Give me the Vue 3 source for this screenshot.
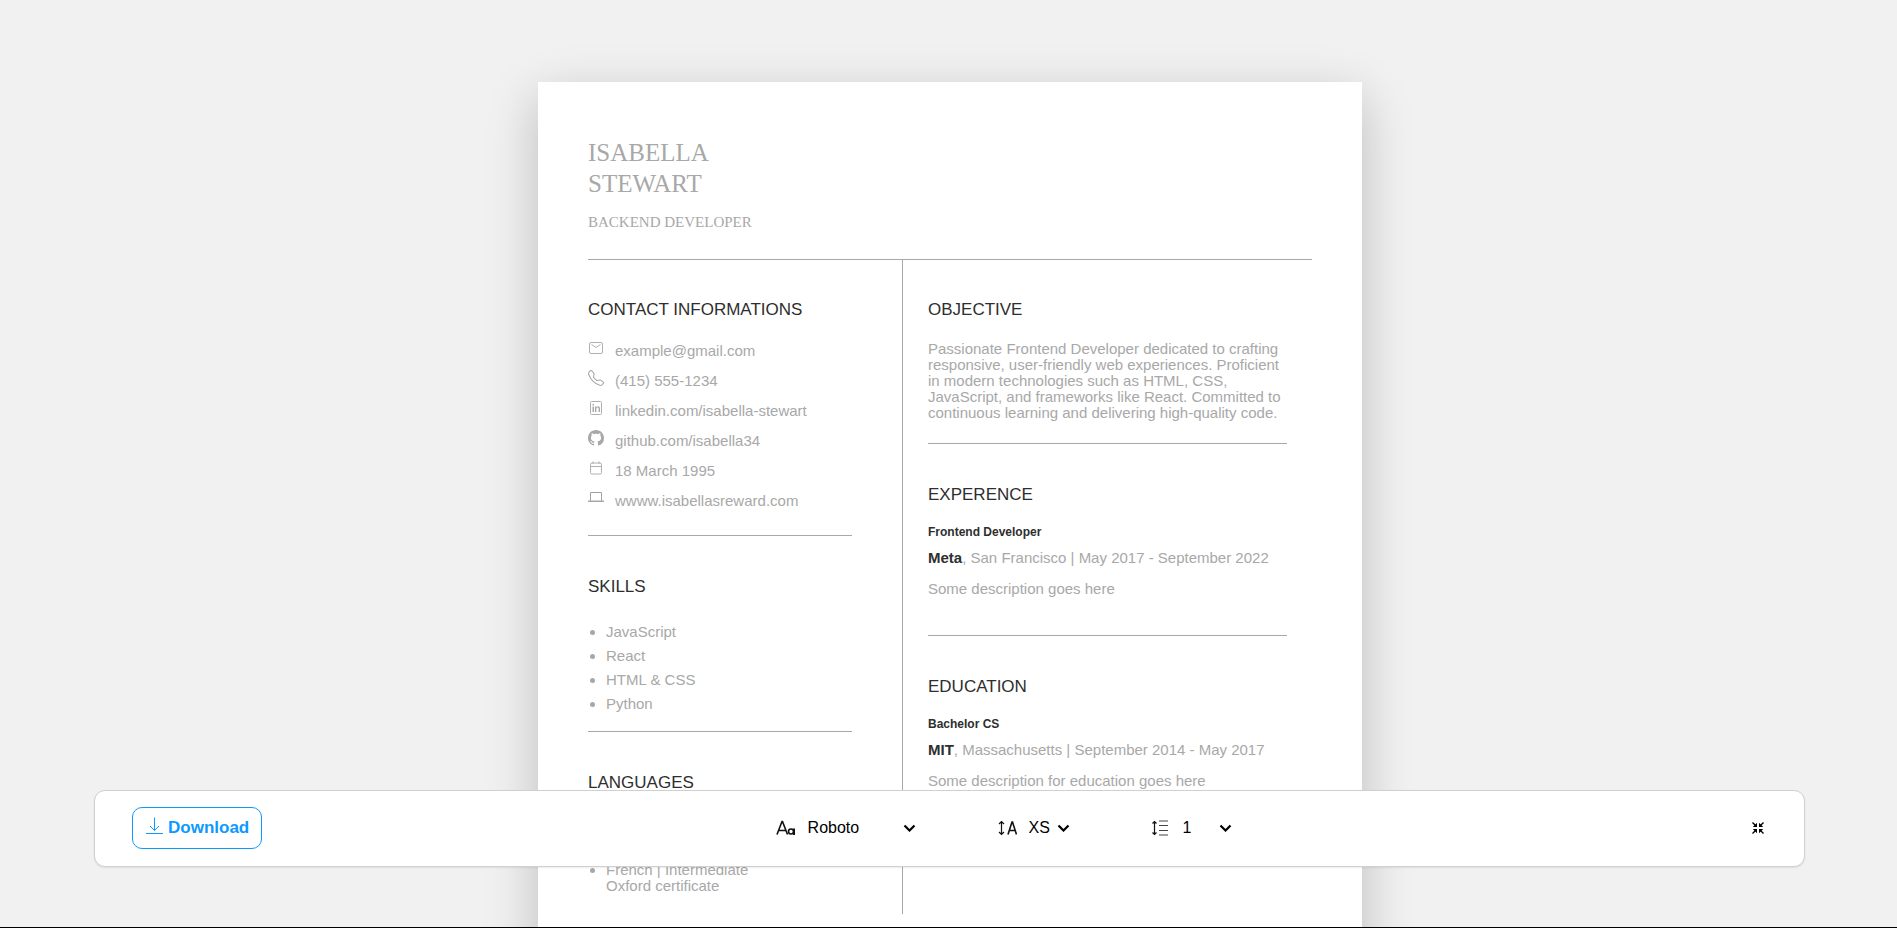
<script setup>
import { ref } from 'vue'

const font = ref('Roboto')
const size = ref('XS')
const spacing = ref('1')

const contacts = [
  { icon: 'mail', text: 'example@gmail.com' },
  { icon: 'phone', text: '(415) 555-1234' },
  { icon: 'linkedin', text: 'linkedin.com/isabella-stewart' },
  { icon: 'github', text: 'github.com/isabella34' },
  { icon: 'calendar', text: '18 March 1995' },
  { icon: 'laptop', text: 'wwww.isabellasreward.com' },
]

const skills = ['JavaScript', 'React', 'HTML & CSS', 'Python']
</script>

<template>
  <div class="stage">
    <main class="paper">
      <header class="intro">
        <h1>ISABELLA<br />STEWART</h1>
        <p>BACKEND DEVELOPER</p>
      </header>

      <div class="columns">
        <div class="side">
          <section>
            <h2>CONTACT INFORMATIONS</h2>
            <ul class="contacts">
              <li v-for="item in contacts" :key="item.icon">
                <svg viewBox="0 0 16 16" aria-hidden="true">
                  <g v-if="item.icon === 'mail'" class="line">
                    <rect x="1.5" y="2.5" width="13" height="11" rx="1.5" />
                    <path d="M3.500 4.500L8 7.500l4.500-3" />
                  </g>
                  <path
                    v-else-if="item.icon === 'phone'"
                    d="M3.654 1.328a.678.678 0 0 0-1.015-.063L1.605 2.3c-.483.484-.661 1.169-.45 1.77a17.568 17.568 0 0 0 4.168 6.608 17.569 17.569 0 0 0 6.608 4.168c.601.211 1.286.033 1.77-.45l1.034-1.034a.678.678 0 0 0-.063-1.015l-2.307-1.794a.678.678 0 0 0-.58-.122l-2.19.547a1.745 1.745 0 0 1-1.657-.459L5.482 8.062a1.745 1.745 0 0 1-.46-1.657l.548-2.19a.678.678 0 0 0-.122-.58L3.654 1.328zM1.884.511a1.745 1.745 0 0 1 2.612.163L6.29 2.98c.329.423.445.974.315 1.494l-.547 2.19a.678.678 0 0 0 .178.643l2.457 2.457a.678.678 0 0 0 .644.178l2.189-.547a1.745 1.745 0 0 1 1.494.315l2.306 1.794c.829.645.905 1.87.163 2.611l-1.034 1.034c-.74.74-1.846 1.065-2.877.702a18.634 18.634 0 0 1-7.01-4.42 18.634 18.634 0 0 1-4.42-7.009c-.362-1.03-.037-2.137.703-2.877L1.885.511z"
                  />
                  <g v-else-if="item.icon === 'linkedin'">
                    <rect class="line" x="2.5" y="1.5" width="11" height="13" rx="1" />
                    <path d="M4.500 6.500H6V12H4.500zM4.500 4H6v1.500H4.500zM7 6.500h1.300v.7C9.300 5.800 12 6 12 8.500V12h-1.400V8.800c0-1.700-2.200-1.500-2.200 0V12H7z" />
                  </g>
                  <path
                    v-else-if="item.icon === 'github'"
                    d="M8 0C3.58 0 0 3.58 0 8c0 3.54 2.29 6.53 5.47 7.59.4.07.55-.17.55-.38 0-.19-.01-.82-.01-1.49-2.01.37-2.53-.49-2.69-.94-.09-.23-.48-.94-.82-1.13-.28-.15-.68-.52-.01-.53.63-.01 1.08.58 1.23.82.72 1.21 1.87.87 2.33.66.07-.52.28-.87.51-1.07-1.78-.2-3.64-.89-3.64-3.95 0-.87.31-1.59.82-2.15-.08-.2-.36-1.02.08-2.12 0 0 .67-.21 2.2.82.64-.18 1.32-.27 2-.27s1.36.09 2 .27c1.53-1.04 2.2-.82 2.2-.82.44 1.1.16 1.92.08 2.12.51.56.82 1.27.82 2.15 0 3.07-1.87 3.75-3.65 3.95.29.25.54.73.54 1.48 0 1.07-.01 1.93-.01 2.2 0 .21.15.46.55.38A8.01 8.01 0 0 0 16 8c0-4.42-3.58-8-8-8z"
                  />
                  <path
                    v-else-if="item.icon === 'calendar'"
                    class="line"
                    d="M2.500 4.500q0-1.500 1.500-1.500h8q1.500 0 1.500 1.500V12.500q0 1.500-1.500 1.500H4q-1.500 0-1.500-1.500zM2.500 6.500h11M5 1.500V4M11 1.500V4"
                  />
                  <g v-else>
                    <path class="line strong" d="M2.500 11V2.500h11V11" />
                    <path d="M0 10.500h16V12H0z" />
                  </g>
                </svg>
                <span>{{ item.text }}</span>
              </li>
            </ul>
            <hr class="after-contacts" />
          </section>

          <section>
            <h2>SKILLS</h2>
            <ul class="bullets skills">
              <li v-for="skill in skills" :key="skill">{{ skill }}</li>
            </ul>
            <hr class="after-skills" />
          </section>

          <section>
            <h2>LANGUAGES</h2>
            <ul class="bullets languages">
              <li>French | Intermediate<br />Oxford certificate</li>
            </ul>
          </section>
        </div>

        <div class="body">
          <section>
            <h2>OBJECTIVE</h2>
            <p class="objective">
              Passionate Frontend Developer dedicated to crafting responsive,
              user-friendly web experiences. Proficient in modern technologies
              such as HTML, CSS, JavaScript, and frameworks like React. Committed
              to continuous learning and delivering high-quality code.
            </p>
            <hr class="after-objective" />
          </section>

          <section>
            <h2>EXPERENCE</h2>
            <h3>Frontend Developer</h3>
            <p class="place"><strong>Meta</strong>, San Francisco | May 2017 - September 2022</p>
            <p class="note">Some description goes here</p>
            <hr class="after-entry" />
          </section>

          <section>
            <h2>EDUCATION</h2>
            <h3>Bachelor CS</h3>
            <p class="place"><strong>MIT</strong>, Massachusetts | September 2014 - May 2017</p>
            <p class="note">Some description for education goes here</p>
          </section>
        </div>
      </div>
    </main>

    <div class="toolbar" role="toolbar" aria-label="Resume tools">
      <button class="download" type="button">
        <svg viewBox="0 0 18 18" width="18" height="18" aria-hidden="true">
          <path d="M9.500 .500v13M5 9l4.500 4.500L14 9M1 16.500h17" />
        </svg>
        <span>Download</span>
      </button>

      <div class="settings">
        <label class="setting">
          <svg class="glyph" viewBox="0 0 20 20" aria-hidden="true">
            <path class="medium" d="M1 16.500L6 3.500h.500l5 13M3 12.500h7" />
            <circle class="medium" cx="15" cy="13.500" r="2.500" />
            <path class="bold" d="M18 10.500v6.500" />
          </svg>
          <select v-model="font" class="wide" aria-label="Font family">
            <option>Roboto</option>
          </select>
          <svg class="chevron" viewBox="0 0 13 8" aria-hidden="true"><path d="M1.500 1.500l5 5 5-5" /></svg>
        </label>

        <label class="setting">
          <svg class="glyph" viewBox="0 0 20 20" aria-hidden="true">
            <path class="arrows" d="M4.500 3.500v13M2 6l2.500-2.500L7 6M2 14l2.500 2.500L7 14" />
            <path class="medium" d="M11 16.500L15 4h.500l4 12.500M12 12.500h6.500" />
          </svg>
          <select v-model="size" class="small" aria-label="Font size">
            <option>XS</option>
          </select>
          <svg class="chevron" viewBox="0 0 13 8" aria-hidden="true"><path d="M1.500 1.500l5 5 5-5" /></svg>
        </label>

        <label class="setting">
          <svg class="glyph" viewBox="0 0 20 20" aria-hidden="true">
            <path class="arrows" d="M3.500 3.500v13M1.500 5.500l2-2 2 2M1.500 14.500l2 2 2-2" />
            <path class="rows" d="M8 3h9M8 7.500h9M8 12.500h9M8 17h9" />
          </svg>
          <select v-model="spacing" class="middle" aria-label="Line spacing">
            <option>1</option>
          </select>
          <svg class="chevron" viewBox="0 0 13 8" aria-hidden="true"><path d="M1.500 1.500l5 5 5-5" /></svg>
        </label>
      </div>

      <button class="collapse" type="button" aria-label="Collapse toolbar">
        <svg viewBox="0 0 12 12" width="12" height="12" aria-hidden="true">
          <path class="arrow" d="M.500 .500L4 4M11.500 .500L8 4M.500 11.500L4 8M11.500 11.500L8 8" />
          <path d="M5 .800V5H.800zM7 .800V5h4.200zM5 11.200V7H.800zM7 11.200V7h4.200z" />
        </svg>
      </button>
    </div>
  </div>
</template>

<style>
body {
  margin: 0;
  background: #f1f1f1;
}
</style>

<style scoped>
.stage {
  box-sizing: border-box;
  position: relative;
  height: 100vh;
  overflow: hidden;
  display: flex;
  justify-content: center;
  padding-top: 82px;
  border-bottom: 1px solid #000;
  background: #f1f1f1;
  font-family: "Liberation Sans", Arial, sans-serif;
  color: #a8a8a8;
}

.paper {
  box-sizing: border-box;
  width: 100%;
  max-width: 824px;
  min-height: 1100px;
  margin-left: 3px;
  padding: 55px 50px;
  background: #fff;
  box-shadow: 0 16px 48px rgba(0, 0, 0, 0.22);
}

h1, h2, h3, p, ul {
  margin: 0;
  padding: 0;
}

ul {
  list-style: none;
}

.intro {
  padding-bottom: 28px;
  border-bottom: 1px solid #a8a8a8;
  font-family: "Liberation Serif", "Times New Roman", serif;
}

.intro h1 {
  font-size: 25px;
  line-height: 31px;
  font-weight: 400;
}

.intro p {
  margin-top: 14px;
  font-size: 15px;
  line-height: 18px;
}

.columns {
  display: grid;
  grid-template-columns: 315px 1fr;
  font-size: 15px;
  line-height: 16px;
}

.side {
  padding: 0 50px 20px 0;
  border-right: 1px solid #a8a8a8;
}

.body {
  padding: 0 25px;
}

section {
  padding-top: 40px;
}

section + section {
  padding-top: 41px;
}

h2 {
  font-size: 17px;
  line-height: 20px;
  font-weight: 400;
  color: #2e2e2e;
}

h3 {
  margin-top: 19px;
  font-size: 12px;
  line-height: 16px;
  font-weight: 700;
  color: #2e2e2e;
}

strong {
  color: #2e2e2e;
}

hr {
  height: 1px;
  margin: 0;
  border: 0;
  background: #a8a8a8;
}

.after-contacts {
  margin-top: 19px;
}

.after-skills {
  margin-top: 15px;
}

.after-objective {
  margin-top: 22px;
}

.after-entry {
  margin-top: 38px;
}

.contacts {
  margin-top: 16px;
}

.contacts li {
  display: flex;
  align-items: flex-start;
  gap: 11px;
  line-height: 30px;
}

.contacts svg {
  width: 16px;
  height: 16px;
  margin-top: 4px;
  fill: #a8a8a8;
}

.contacts .line {
  fill: none;
  stroke: #b0b0b0;
  stroke-width: 1;
}

.contacts .strong {
  stroke: #a0a0a0;
}

.bullets {
  padding-left: 18px;
  list-style: disc;
}

.skills {
  margin-top: 23px;
  line-height: 24px;
}

.languages {
  margin-top: 69px;
}

.objective {
  margin-top: 21px;
}

.place {
  margin-top: 10px;
}

.note {
  margin-top: 15px;
}

.toolbar {
  box-sizing: border-box;
  position: absolute;
  left: 94px;
  right: 92px;
  bottom: 60px;
  display: flex;
  align-items: center;
  justify-content: space-between;
  padding: 16px 37px 17px;
  border: 1px solid #d0d0d0;
  border-radius: 11px;
  background: #fff;
  box-shadow: 0 1px 2px rgba(0, 0, 0, 0.08);
  color: #000;
}

button,
select {
  margin: 0;
  padding: 0;
  border: 0;
  background: none;
  font-family: inherit;
  color: inherit;
}

.download {
  display: flex;
  align-items: center;
  gap: 5px;
  height: 42px;
  padding: 0 12px;
  border: 1px solid #0d99ff;
  border-radius: 10px;
  color: #0d99ff;
  font-size: 17px;
  font-weight: 700;
}

.download svg {
  margin-bottom: 4px;
  fill: none;
  stroke: #0d99ff;
  stroke-width: 1;
}

.settings {
  display: flex;
  gap: 81px;
  margin-right: 4px;
}

.setting {
  display: flex;
  align-items: center;
}

.glyph {
  width: 20px;
  height: 20px;
  margin-right: 12px;
  fill: none;
  stroke: #111;
  stroke-width: 1;
}

.glyph .bold {
  stroke-width: 2;
}

.glyph .medium {
  stroke-width: 1.6;
}

.glyph .arrows {
  stroke-width: 1.2;
}

.glyph .rows {
  stroke: #444;
}

select {
  appearance: none;
  font-size: 16px;
  line-height: 20px;
}

.wide {
  width: 95px;
}

.small {
  width: 28px;
}

.middle {
  width: 36px;
}

.chevron {
  width: 13px;
  height: 8px;
  fill: none;
  stroke: #000;
  stroke-width: 2.2;
}

.collapse {
  display: flex;
  justify-content: center;
  width: 18px;
}

.collapse .arrow {
  stroke: #000;
  stroke-width: 1.4;
}
</style>
